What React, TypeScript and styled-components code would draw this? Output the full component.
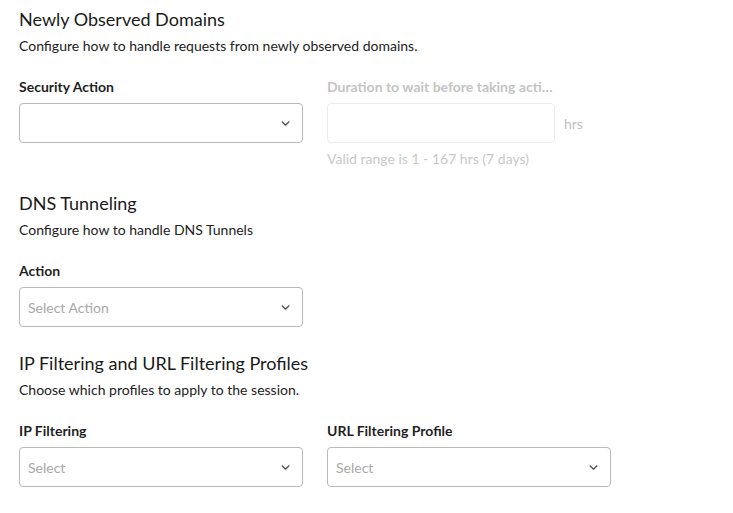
import React from 'react';
import styled, { createGlobalStyle } from 'styled-components';

const GlobalStyle = createGlobalStyle`
    body {
        margin: 0;
        background: #ffffff;
        font-family: Lato, 'Open Sans', sans-serif;
        color: #1f1f1f;
    }
`;

const Page = styled.div`
    padding: 7px 19px;
    display: flex;
    flex-direction: column;
    gap: 24px;
`;

const Section = styled.section`
    display: flex;
    flex-direction: column;
`;

const SectionTitle = styled.h2`
    margin: 0;
    font-size: 18px;
    line-height: 24px;
    font-weight: 400;
    color: #1a1a1a;
`;

const SectionDescription = styled.p`
    margin: 6px 0 0;
    font-size: 14px;
    line-height: 18px;
    color: #222222;
`;

const FieldRow = styled.div`
    margin-top: 23px;
    display: flex;
    gap: 24px;
    align-items: flex-start;
`;

const Field = styled.div`
    display: flex;
    flex-direction: column;
    gap: 7px;
`;

const FieldLabel = styled.label<{ $disabled?: boolean }>`
    font-size: 14px;
    line-height: 18px;
    font-weight: 700;
    color: ${(p) => (p.$disabled ? '#c4c4c4' : '#1f1f1f')};
    max-width: 227px;
    white-space: nowrap;
    overflow: hidden;
    text-overflow: ellipsis;
`;

const SelectBox = styled.div`
    box-sizing: border-box;
    width: 284px;
    height: 40px;
    border: 1px solid #b9b9b9;
    border-radius: 4px;
    padding: 0 12px 0 8px;
    display: flex;
    align-items: center;
    justify-content: space-between;
    background: #ffffff;
`;

const SelectValue = styled.span`
    font-size: 14px;
    color: #a9a9a9;
`;

const InputLine = styled.div`
    display: flex;
    align-items: center;
    gap: 9px;
`;

const NumberInput = styled.div`
    box-sizing: border-box;
    width: 228px;
    height: 40px;
    border: 1px solid #ededed;
    border-radius: 4px;
    background: #ffffff;
`;

const Unit = styled.span`
    font-size: 14px;
    color: #c0c0c0;
`;

const HelperText = styled.span`
    font-size: 14px;
    line-height: 17px;
    color: #c8c8c8;
`;

const Chevron = () => (
    <svg width="9" height="5" viewBox="0 0 9 5" fill="none">
        <path
            d="M1 0.8l3.5 3.4 3.5-3.4"
            stroke="#4d4d4d"
            strokeWidth="1.2"
            strokeLinecap="round"
            strokeLinejoin="round"
        />
    </svg>
);

const Select = ({ placeholder }: { placeholder?: string }) => (
    <SelectBox>
        <SelectValue>{placeholder}</SelectValue>
        <Chevron />
    </SelectBox>
);

export default function App() {
    return (
        <>
            <GlobalStyle />
            <Page>
                <Section>
                    <SectionTitle>Newly Observed Domains</SectionTitle>
                    <SectionDescription>
                        Configure how to handle requests from newly observed domains.
                    </SectionDescription>
                    <FieldRow>
                        <Field>
                            <FieldLabel>Security Action</FieldLabel>
                            <Select />
                        </Field>
                        <Field>
                            <FieldLabel $disabled>
                                Duration to wait before taking action
                            </FieldLabel>
                            <InputLine>
                                <NumberInput />
                                <Unit>hrs</Unit>
                            </InputLine>
                            <HelperText>Valid range is 1 - 167 hrs (7 days)</HelperText>
                        </Field>
                    </FieldRow>
                </Section>

                <Section>
                    <SectionTitle>DNS Tunneling</SectionTitle>
                    <SectionDescription>Configure how to handle DNS Tunnels</SectionDescription>
                    <FieldRow>
                        <Field>
                            <FieldLabel>Action</FieldLabel>
                            <Select placeholder="Select Action" />
                        </Field>
                    </FieldRow>
                </Section>

                <Section>
                    <SectionTitle>IP Filtering and URL Filtering Profiles</SectionTitle>
                    <SectionDescription>
                        Choose which profiles to apply to the session.
                    </SectionDescription>
                    <FieldRow>
                        <Field>
                            <FieldLabel>IP Filtering</FieldLabel>
                            <Select placeholder="Select" />
                        </Field>
                        <Field>
                            <FieldLabel>URL Filtering Profile</FieldLabel>
                            <Select placeholder="Select" />
                        </Field>
                    </FieldRow>
                </Section>
            </Page>
        </>
    );
}
